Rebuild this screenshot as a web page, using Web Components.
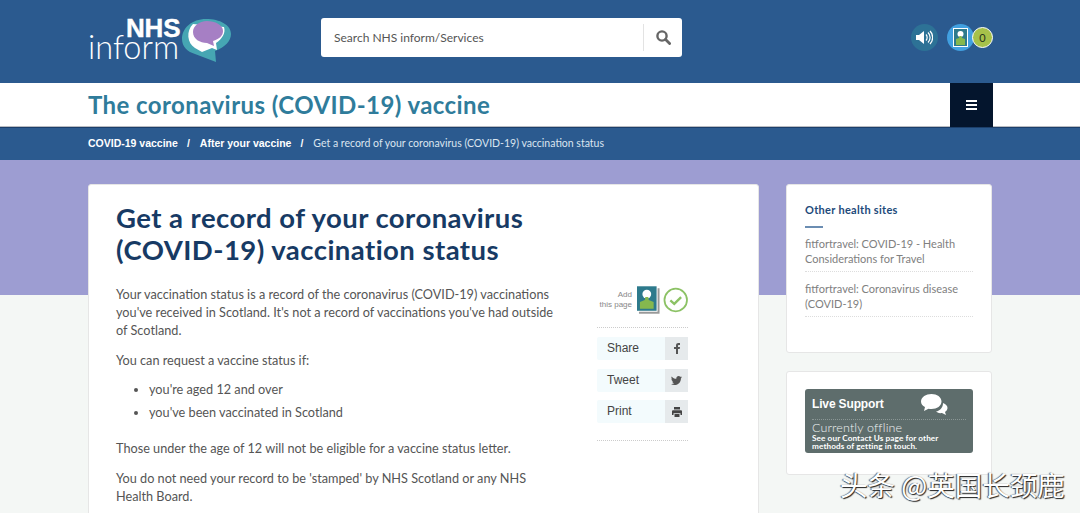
<!DOCTYPE html>
<html>
<head>
<meta charset="utf-8">
<style>
  html, body { margin: 0; height: 513px; overflow: hidden; background: #f4f7f5; }
  body { font-family: Lato, "Noto Sans CJK SC", sans-serif; }
</style>
</head>
<body>
<site-header></site-header>
<title-bar>The coronavirus (COVID-19) vaccine</title-bar>
<bread-crumbs></bread-crumbs>
<page-body>
  <main-card></main-card>
  <side-column></side-column>
</page-body>
<water-mark>头条 @英国长颈鹿</water-mark>

<script>
class SiteHeader extends HTMLElement {
  constructor() {
    super();
    this.attachShadow({ mode: 'open' }).innerHTML = `<style>
      :host { display: flex; height: 83px; background: #2b5a8f; box-sizing: border-box; padding: 0 88px; align-items: flex-start; }
      .logo { position: relative; width: 146px; height: 62px; margin-top: 14px; color: #fff; flex: none; }
      .nhs { position: absolute; left: 38px; top: 6px; font: 700 26px/16px "Liberation Sans", sans-serif; letter-spacing: -.2px; -webkit-text-stroke: .4px #fff; }
      .inform { position: absolute; left: 0; top: 23px; font: 300 32.5px/20px Lato, sans-serif; }
      .logo svg { position: absolute; left: 94px; top: 5px; }
      .search { width: 361px; height: 39px; background: #fff; border-radius: 3px; margin: 18px 0 0 87px; display: flex; align-items: center; box-sizing: border-box; padding-left: 13px; font-size: 12px; color: #555; flex: none; }
      .search span { flex: 1; }
      .btn { width: 38px; height: 27px; border-left: 1px solid #e3e3e3; display: flex; align-items: center; justify-content: center; }
      .tools { display: flex; align-items: center; margin: 23px 0 0 auto; width: 81px; height: 28px; }
      .round { width: 27px; height: 27px; border-radius: 50%; display: flex; align-items: center; justify-content: center; flex: none; }
      .sound { background: #2d7296; margin-right: 9px; }
      .saved { background: #41a0e0; }
      .count { width: 19px; height: 19px; border-radius: 50%; background: #a6c14a; border: 1px solid #fff; color: #26331a; font-size: 11px; display: flex; align-items: center; justify-content: center; margin-left: -2px; flex: none; }
    </style>
    <div class="logo">
      <span class="nhs">NHS</span><span class="inform">inform</span>
      <svg width="50" height="44" viewBox="0 0 50 44">
        <path d="M24 0C10 0 0 9 0 20c0 8 6 13 13 15l21 8-1-11c10-4 16-10 16-17C49 6 38 0 24 0z" fill="#46a6b3"/>
        <path d="M11 5C4 12 5 24 13 29l7 4 10-4 5 2-1-7c6-4 10-10 8-16z" fill="#fff"/>
        <path d="M25 2c-8 0-14 5-14 11 0 7 7 11 14 11l7 3-1-5c6-2 10-5 10-10C41 6 33 2 25 2z" fill="#a67fc4"/>
      </svg>
    </div>
    <div class="search"><span>Search NHS inform/Services</span>
      <div class="btn"><svg width="15" height="15" viewBox="0 0 15 15"><circle cx="6" cy="6" r="4.6" fill="none" stroke="#666" stroke-width="2.4"/><path d="M9.6 9.6 L13.6 13.6" stroke="#666" stroke-width="2.8" stroke-linecap="round"/></svg></div>
    </div>
    <div class="tools">
      <div class="round sound"><svg width="17" height="15" viewBox="0 0 17 15"><path d="M0 5h3l5-4v13l-5-4H0z" fill="#fff"/><path d="M10 4.500c1.500 1.500 1.500 4.500 0 6M12 2.500c2.800 2.800 2.800 7.200 0 10M14 1c3.500 3.500 3.500 9.500 0 13" fill="none" stroke="#fff" stroke-width="1.2"/></svg></div>
      <div class="round saved"><svg width="15" height="19" viewBox="0 0 15 19"><rect x=".5" y=".5" width="14" height="18" fill="#2d7a8c" stroke="#fff"/><circle cx="7.500" cy="6" r="3" fill="#fff"/><path d="M6.500 8h2l.5 2 3 1v6H3v-6l3-1z" fill="#85b84e"/></svg></div>
      <div class="count">0</div>
    </div>`;
  }
}
customElements.define('site-header', SiteHeader);

class TitleBar extends HTMLElement {
  constructor() {
    super();
    this.attachShadow({ mode: 'open' }).innerHTML = `<style>
      :host { display: flex; height: 43px; background: #fff; padding: 0 87px 0 88px; justify-content: space-between; border-bottom: 1px solid #b9bcc2; }
      .t { font-size: 24px; line-height: 43px; font-weight: 700; color: #2f7c9b; letter-spacing: .42px; }
      .menu { width: 43px; height: 44px; background: #04152d; display: flex; align-items: center; justify-content: center; }
      .menu i { display: block; width: 11px; height: 6px; border-top: 2px solid #fff; border-bottom: 2px solid #fff; position: relative; }
      .menu i::after { content: ""; position: absolute; left: 0; right: 0; top: 2px; height: 2px; background: #fff; }
    </style><div class="t"><slot></slot></div><div class="menu"><i></i></div>`;
  }
}
customElements.define('title-bar', TitleBar);

class BreadCrumbs extends HTMLElement {
  constructor() {
    super();
    this.attachShadow({ mode: 'open' }).innerHTML = `<style>
      :host { display: flex; height: 33px; background: #2b5a8f; padding: 0 88px 2px; box-sizing: border-box; border-top: 1px solid #1c3f6b; align-items: center; color: #fff; font-size: 10.5px; font-family: "Liberation Sans", sans-serif; }
      b { font-weight: 700; }
      .s { margin: 0 10px 0 9px; font-weight: 700; }
      .l { color: #dbe5ef; font-family: Lato, sans-serif; }
    </style><b>COVID-19 vaccine</b><span class="s">/</span><b>After your vaccine</b><span class="s">/</span><span class="l">Get a record of your coronavirus (COVID-19) vaccination status</span>`;
  }
}
customElements.define('bread-crumbs', BreadCrumbs);

class PageBody extends HTMLElement {
  constructor() {
    super();
    this.attachShadow({ mode: 'open' }).innerHTML = `<style>
      :host { display: flex; gap: 27px; padding: 24px 88px 0; height: 353px; box-sizing: border-box; overflow: hidden; background: linear-gradient(#9d9dd2 0 135px, #f4f7f5 135px); align-items: flex-start; }
    </style><slot></slot>`;
  }
}
customElements.define('page-body', PageBody);

class MainCard extends HTMLElement {
  constructor() {
    super();
    this.attachShadow({ mode: 'open' }).innerHTML = `<style>
      :host { display: block; width: 671px; height: 400px; flex: none; background: #fff; border: 1px solid #e6e6e6; border-radius: 3px; box-sizing: border-box; padding: 17px 27px; color: #555; font-size: 12.7px; line-height: 18px; }
      h1 { margin: 0 0 19px; width: 480px; font-size: 27.5px; line-height: 32px; font-weight: 700; color: #173a64; letter-spacing: .45px; }
      .cols { display: flex; gap: 37px; }
      .text { width: 444px; flex: none; }
      p { margin: 0 0 12px; }
      ul { margin: -1px 0 18px; padding: 0 0 0 33px; }
      li { margin-bottom: 5px; }
    </style>
    <h1>Get a record of your coronavirus (COVID-19) vaccination status</h1>
    <div class="cols">
      <div class="text">
        <p>Your vaccination status is a record of the coronavirus (COVID-19) vaccinations you've received in Scotland. It's not a record of vaccinations you've had outside of Scotland.</p>
        <p>You can request a vaccine status if:</p>
        <ul><li>you're aged 12 and over</li><li>you've been vaccinated in Scotland</li></ul>
        <p>Those under the age of 12 will not be eligible for a vaccine status letter.</p>
        <p>You do not need your record to be 'stamped' by NHS Scotland or any NHS Health Board.</p>
      </div>
      <share-panel></share-panel>
    </div>`;
  }
}
customElements.define('main-card', MainCard);

class SharePanel extends HTMLElement {
  constructor() {
    super();
    this.attachShadow({ mode: 'open' }).innerHTML = `<style>
      :host { display: block; width: 91px; flex: none; font-family: "Liberation Sans", sans-serif; }
      .add { display: flex; align-items: center; height: 32px; margin-top: -1px; padding-bottom: 11px; margin-bottom: 9px; border-bottom: 1px dotted #ccc; }
      .lab { font-size: 8px; line-height: 10px; color: #888; text-align: right; width: 35px; margin-right: 5px; flex: none; white-space: nowrap; }
      .check { margin-left: 3px; }
      .row { display: flex; height: 23px; margin-bottom: 8.5px; background: #f3fbfd; font-size: 12px; line-height: 23px; color: #444; padding-left: 10px; justify-content: space-between; border-radius: 2px; }
      .ic { width: 23px; background: #e6eaec; display: flex; align-items: center; justify-content: center; }
      .end { border-top: 1px dotted #ccc; margin-top: 17px; }
    </style>
    <div class="add">
      <div class="lab">Add<br>this page</div>
      <svg width="23" height="28" viewBox="0 0 23 28"><rect x="2" y="2" width="21" height="26" fill="#999"/><rect x="1" y="1" width="20" height="25" fill="#fff"/><rect y="0" width="20" height="25" fill="#2d7a8c"/><circle cx="10" cy="8" r="4.500" fill="#fff"/><path d="M8.500 11h3l.5 3 5 2v7H3v-7l5-2z" fill="#85b84e"/></svg>
      <svg class="check" width="26" height="26" viewBox="0 0 26 26"><circle cx="13" cy="13" r="11.500" fill="none" stroke="#8cc265" stroke-width="1.8"/><path d="M7.500 13.500l4 3.500 7-7" fill="none" stroke="#8cc265" stroke-width="2.4"/></svg>
    </div>
    <div class="row">Share<div class="ic"><svg width="6" height="11" viewBox="0 0 6 11"><path d="M2 11V6H0V4h2V2.500C2 .8 3 0 4.300 0H6v2H5C4.300 2 4 2.300 4 3v1h2l-.3 2H4v5z" fill="#555"/></svg></div></div>
    <div class="row">Tweet<div class="ic"><svg width="11" height="9" viewBox="0 0 11 9"><path d="M11 1c-.4.2-.8.300-1.300.400.5-.3.800-.7 1-1.200-.4.300-.9.500-1.400.6C8.900.3 8.300 0 7.600 0 6.300 0 5.300 1 5.300 2.300c0 .2 0 .4.100.5C3.500 2.700 1.800 1.800.7.400c-.6 1-.3 2.300.700 3-.4 0-.7-.1-1-.3 0 1.100.8 2.100 1.800 2.300-.3.1-.7.1-1 0 .3.900 1.100 1.600 2.100 1.600C2.400 7.800 1.200 8.200 0 8c1 .6 2.200 1 3.500 1 4.200 0 6.500-3.500 6.400-6.600.4-.4.800-.8 1.100-1.400z" fill="#555"/></svg></div></div>
    <div class="row">Print<div class="ic"><svg width="10" height="10" viewBox="0 0 10 10"><path d="M2 0h6v2.500H2zM1 3.300h8a1 1 0 0 1 1 1V8H8.500V6.200h-7V8H0V4.300a1 1 0 0 1 1-1zM2.500 7h5v3h-5z" fill="#444"/></svg></div></div>
    <div class="end"></div>`;
  }
}
customElements.define('share-panel', SharePanel);

class SideColumn extends HTMLElement {
  constructor() {
    super();
    this.attachShadow({ mode: 'open' }).innerHTML = `<style>
      :host { display: block; width: 206px; flex: none; }
      .card { background: #fff; border: 1px solid #e6e6e6; border-radius: 3px; box-sizing: border-box; margin-bottom: 18px; padding: 0 18px; }
      .sites { height: 169px; padding-top: 17px; }
      h3 { margin: 0; font-size: 11px; line-height: 15px; font-weight: 700; color: #1d4a7a; letter-spacing: .3px; }
      h3::after { content: ""; display: block; width: 18px; height: 2px; background: #6b8db2; margin: 9px 0 8px; }
      a { display: block; font-size: 11px; line-height: 15px; color: #808080; padding-bottom: 5px; border-bottom: 1px dotted #ddd; margin-bottom: 9px; }
      .live { height: 104px; padding-top: 17px; }
      .box { height: 64px; background: #5e6d6c; border-radius: 3px; color: #fff; box-sizing: border-box; padding: 8px 7px; position: relative; font-family: "Liberation Sans", sans-serif; }
      .h { font-size: 12px; font-weight: 700; line-height: 14px; padding-bottom: 8px; border-bottom: 1px dotted #8a9695; letter-spacing: -.15px; }
      .o { font: 300 12.5px/13px Lato, sans-serif; margin-top: 1px; letter-spacing: .15px; color: #eef2f2; }
      .m { font: 700 8.2px/8px Lato, sans-serif; letter-spacing: .1px; }
      .box svg { position: absolute; right: 25px; top: 5px; }
    </style>
    <div class="card sites">
      <h3>Other health sites</h3>
      <a>fitfortravel: COVID-19 - Health Considerations for Travel</a>
      <a>fitfortravel: Coronavirus disease (COVID-19)</a>
    </div>
    <div class="card live">
      <div class="box">
        <div class="h">Live Support</div>
        <div class="o">Currently offline</div>
        <div class="m">See our Contact Us page for other<br>methods of getting in touch.</div>
        <svg width="27" height="21" viewBox="0 0 27 21"><path d="M22 9c3 1 4.500 3 4.500 5 0 2-1.500 3-2.500 4l1 3-4-2c-3 .5-5-.5-6-1.500 4-.5 7-4 7-8.500z" fill="#fff"/><path d="M10.500 0C16 0 20.500 3 20.500 7.500S16 15 10.500 15c-1 0-2 0-3-.3L3 17l1-4C1.500 12 0 10 0 7.500 0 3 5 0 10.500 0z" fill="#fff"/></svg>
      </div>
    </div>`;
  }
}
customElements.define('side-column', SideColumn);

class WaterMark extends HTMLElement {
  constructor() {
    super();
    this.attachShadow({ mode: 'open' }).innerHTML = `<style>
      :host { position: absolute; left: 840px; top: 467px; font: 400 27.5px/34px "Noto Sans CJK SC", sans-serif; color: #fff; white-space: nowrap; text-shadow: 1px 1px 1px #222, -1px 0 1px #555; }
    </style><slot></slot>`;
  }
}
customElements.define('water-mark', WaterMark);
</script>
</body>
</html>
